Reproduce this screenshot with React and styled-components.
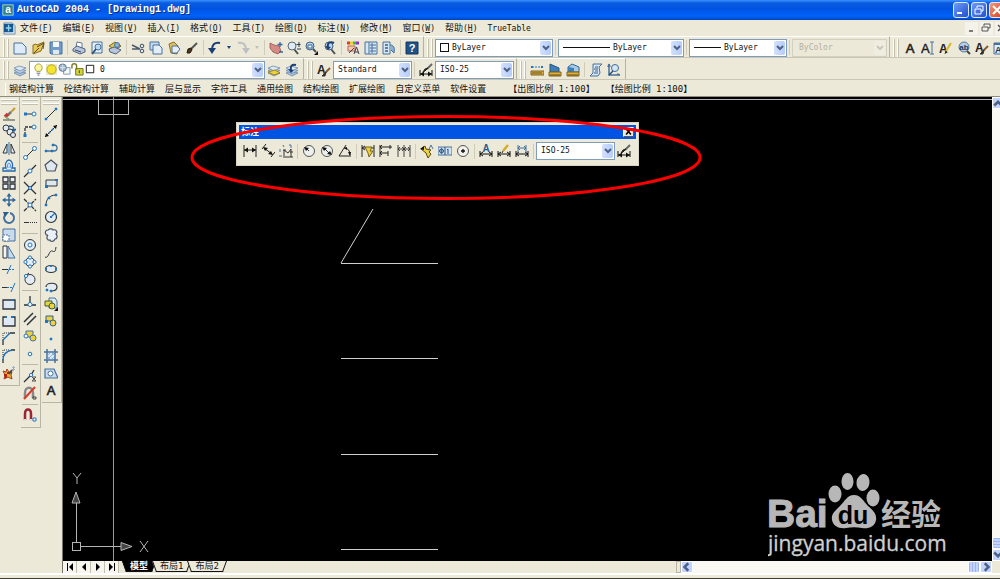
import React from 'react'
import styled, { createGlobalStyle, css } from 'styled-components'

const INK = '#2e3338'
const BLUE = '#1f74c4'
const STEEL = '#46719c'
const GOLD = '#ecd23c'

const dimBase = <path d="M1 7v6M13 7v6M1 10h12M4 8L1 10l3 2M10 8l3 2-3 2" stroke="#111" />

const layerStack = (
  <g stroke="#5d7fa5" strokeWidth=".7">
    <path d="M1 10l5-2 7 2-6 3z" fill="#a9c2dc" />
    <path d="M1 7.500l5-2 7 2-6 3z" fill="#c0d3e6" />
    <path d="M1 5l5-2 7 2-6 3z" fill="#dbe7f3" />
  </g>
)

const icons = {
  new: <path d="M1 2h8l4 4v7H1z" fill="#dcebf7" stroke={STEEL} />,
  open: <><path d="M2 4l3-1 1 1 7-3-3 9-8 3z" fill="#e8c75a" stroke="#8d6c1e" /><path d="M6 6l7-4-1 6M3 12l5-5" stroke="#5b4a1e" /></>,
  save: <><path d="M1 1h12v12H2l-1-1z" fill="#6f9cc8" stroke={STEEL} /><path d="M4 1h6v5H4z" fill="#f3f7fb" stroke="none" /><path d="M4 9h6v4H4z" fill="#dfe9f3" stroke="none" /></>,
  print: <><path d="M4 6l1-5 5 1v5z" fill="#fff" stroke="#65789a" /><path d="M1 8l4-3 8 3v3l-5 2-7-3z" fill="#b9c5da" stroke="#4e6284" /><path d="M3 9l6 2" stroke="#324566" /></>,
  preview: <><path d="M2 1h10v11H2z" fill="#e7f0f8" stroke={STEEL} /><circle cx="8" cy="6" r="3" fill="#bcd8f0" stroke={STEEL} /><path d="M6 8l-4 5" stroke="#2f5379" strokeWidth="2" /></>,
  publish: <><path d="M1 5l6-4 6 4-5 4z" fill="#e9c540" stroke="#846b1d" /><path d="M1 8l5-2 7 3-5 4-6-2z" fill="#b9c5da" stroke="#4e6284" /><circle cx="9" cy="4" r="2.500" fill="#88b5df" stroke={STEEL} /></>,
  cut: <><path d="M1 4l8 4M1 8h8" stroke="#4e5a68" strokeWidth="1.500" /><circle cx="11" cy="5" r="1.800" stroke="#384d70" /><circle cx="11" cy="10" r="1.800" stroke="#384d70" /></>,
  copy: <><path d="M1 1h9v8H1z" fill="#c5dbef" stroke={STEEL} /><path d="M4 4h6l3 3v6H4z" fill="#e3eef8" stroke={STEEL} /></>,
  paste: <><path d="M2 3l5-2 4 4-1 8-6-1z" fill="#e2c25c" stroke="#87702c" /><path d="M5 5h5l3 3-3 4H5z" fill="#e6eff8" stroke={STEEL} /></>,
  match: <><path d="M6 8l6-6" stroke="#555" strokeWidth="2" /><path d="M2 12l1-4 3-1 1 2-2 3z" fill="#4b3324" stroke="#2b1d14" /></>,
  undo: <><path d="M12 2C6 1 4 4 4 9" stroke="#1c3f73" strokeWidth="2" /><path d="M0 7l4 6 4-6z" fill="#1c3f73" stroke="none" /></>,
  redo: <><path d="M2 2c6-1 8 2 8 7" stroke="#bdc0c2" strokeWidth="2" /><path d="M14 7l-4 6-4-6z" fill="#bdc0c2" stroke="none" /></>,
  pan: <><path d="M1 2l4 2 5 1 2 5-3 3-5-2-3-4z" fill="#d68a84" stroke="#8d5453" strokeWidth=".8" /><path d="M11 1v5M8.500 3.500h5M10 11h4" stroke="#36679a" strokeWidth="1.300" /></>,
  zoomRt: <><path d="M7 8l4 5" stroke="#4b4f54" strokeWidth="2" /><circle cx="5" cy="5" r="4" fill="#dfeaf4" stroke="#58697a" /><path d="M12 1v5M9.500 3.500h4M10 8h4" stroke="#223e66" /></>,
  zoomWin: <><path d="M8 8l3 3" stroke="#4b4f54" strokeWidth="2" /><circle cx="5" cy="5" r="4" fill="#b8d2ec" stroke="#46617d" /><path d="M3 4h4v3H3z" fill="#fff" stroke="#336699" /><path d="M13 10v4H9z" fill="#111" stroke="none" /></>,
  zoomPrev: <><path d="M8 8l4 5" stroke="#4b4f54" strokeWidth="2" /><circle cx="6" cy="5" r="4" fill="#b8d2ec" stroke="#46617d" /><path d="M11 2C7 0 4 2 5 6" stroke="#1c3f73" strokeWidth="2" /><path d="M2 5l3 4 3-3z" fill="#1c3f73" stroke="none" /></>,
  props: <><path d="M1 2h3" stroke="#e33" strokeWidth="3" /><path d="M4 2h3" stroke="#e5d22b" strokeWidth="3" /><path d="M7 2h3" stroke="#3ab549" strokeWidth="3" /><path d="M10 2h3" stroke="#8c34c9" strokeWidth="3" /><path d="M2 5h7v5H2z" fill="#f3c9b5" stroke="#b4644b" /><path d="M3 12l5-5M8 13l2.500-7 2.500 7M9 11h3" stroke="#3c3f55" /></>,
  design: <><path d="M1 1h12v12H1z" fill="#d8e7f4" stroke={STEEL} /><path d="M5 1v12M6 4h6M6 7h6M6 10h6M8 2v10" stroke={STEEL} /></>,
  palettes: <><path d="M1 1h7v12H1z" fill="#d8e7f4" stroke={STEEL} /><path d="M3 4h3M3 7h3M3 10h3" stroke="#345f8b" strokeWidth="1.500" /><path d="M8 4c4 0 5 3 4 8l-3-3" fill="#89afd2" stroke={STEEL} /></>,
  help: <><path d="M1 1h12v12H1z" fill="#1e5288" stroke="#12375f" /><text x="7" y="11" textAnchor="middle" fontFamily="Liberation Sans" fontWeight="700" fontSize="11" fill="#fff" stroke="none">?</text></>,

  singleText: <><text x="0" y="12" fontFamily="Liberation Sans" fontSize="13" fill="#222" stroke="#222" strokeWidth=".4">A</text><path d="M9 1h4M11 1v12M9 13h4" stroke={STEEL} /></>,
  editText: <><text x="0" y="12" fontFamily="Liberation Sans" fontSize="12" fontWeight="700" fill="#222" stroke="none">A</text><path d="M12 2L7 10" stroke="#d7b72b" strokeWidth="2" /><path d="M7 10l-1 3" /></>,
  find: <><circle cx="7" cy="6" r="5" fill="#b6cfe8" stroke="#5b7896" /><path d="M10 10l3 3" stroke="#444" strokeWidth="2" /><text x="7" y="9" textAnchor="middle" fontFamily="Liberation Sans" fontSize="8" fontWeight="700" fill="#17375e" stroke="none">ab</text></>,
  textStyle: <><text x="0" y="11" fontFamily="Liberation Sans" fontSize="12" fontWeight="700" fill="#222" stroke="none">A</text><path d="M13 5L8 10" stroke="#8b5a2f" strokeWidth="2" /><path d="M9 9l-1 4-3 0z" fill="#333" stroke="#333" /></>,
  scaleText: <><path d="M1 2h13v11H1z" fill="#e5eef7" stroke={STEEL} /><path d="M1 3h13" stroke={STEEL} strokeWidth="2" /><text x="2" y="12" fontFamily="Liberation Sans" fontSize="9" fontWeight="700" fill="#17375e" stroke="none">A</text></>,

  layers: layerStack,
  makeCurrent: <>{layerStack}<path d="M1 9l6 3 6-2-5-3z" fill={GOLD} stroke="#9a8320" /></>,
  layerPrev: <>{layerStack}<path d="M11 2C7 1 5 3 6 7" stroke="#1c3f73" strokeWidth="2" /><path d="M3 6l3 4 3-3z" fill="#1c3f73" stroke="none" /></>,
  bulb: <><path d="M5 9C1 5 4 1 7 1s6 4 2 8z" fill="#fbf59b" stroke="#9d9531" /><path d="M5 11h4M6 13h2" stroke="#596070" /></>,
  sun: <><path d="M1 1h12v12H1z" fill="#e9e6c9" stroke="none" /><circle cx="7" cy="7" r="5" fill="#f5e42e" stroke="#b09d1c" /></>,
  freeze: <><path d="M6 5h7v7H6z" fill="#f4f6f8" stroke="#7e93a8" /><circle cx="5" cy="5" r="4" fill="#a4b8cc" stroke="#617b97" /><path d="M5 2v6M2 5h6" stroke="#dbe6f0" /></>,
  unlock: <><path d="M5 6h8v7H5z" fill="#d2d439" stroke="#6d701e" /><path d="M1 6V3c0-3 5-3 5 0v4" stroke="#777b25" strokeWidth="1.500" /><path d="M9 8v3" /></>,
  swatch: <path d="M2.500 2.500h8v8h-8z" fill="#fff" stroke="#111" />,
  dimStyle: <><path d="M1 7v6M13 7v6M1 11h12" stroke="#111" /><path d="M1 11l4-2.500v5zM13 11l-4-2.500v5z" fill="#111" stroke="none" /><path d="M13 1L8 6" stroke="#666" strokeWidth="2" /><path d="M9 5L6 8l-2 1 2-3z" fill="#222" stroke="#222" /></>,
  distance: <><path d="M1 8h13v4H1z" fill="#dcae3e" stroke="#7c611d" /><path d="M3 9v2M5 9v2M7 9v2M9 9v2M11 9v2" stroke="#695116" /><path d="M2 4h10" stroke={BLUE} strokeDasharray="2 1" /><path d="M1 3h2v2H1zM11 3h2v2h-2z" fill={BLUE} stroke="none" /></>,
  area: <><path d="M2 1l9 4v4H2z" fill="#3d7fb8" stroke="#255682" /><path d="M1 9h12v4H1z" fill="#dcae3e" stroke="#7c611d" /><path d="M3 11v2M5 11v2M7 11v2M9 11v2M11 11v2" stroke="#695116" /></>,
  mass: <><path d="M2 4l4-3 7 3v5H2z" fill="#a9cbe8" stroke="#316796" /><path d="M2 4l6 1v4H2z" fill="#3d7fb8" stroke="none" /><path d="M1 9h12v4H1z" fill="#dcae3e" stroke="#7c611d" /><path d="M3 11v2M5 11v2M7 11v2M9 11v2M11 11v2" stroke="#695116" /></>,
  list: <><path d="M4 1h9l-3 3 1 6-2 3H1l3-3z" fill="#d8e7f4" stroke={STEEL} /><path d="M6 4h3M5 6h4M6 8h3M5 10h4" stroke="#345f8b" /></>,
  locate: <><path d="M2 1v11h11M2 1L1 4M2 1l1 3M13 12l-3-1" stroke={STEEL} strokeWidth="1.500" /><circle cx="8" cy="5" r="3.500" fill="#d7e6f3" stroke="#3f6b97" /><path d="M6 8l-4 4" stroke="#1f4a79" strokeWidth="1.500" /></>,

  erase: <><path d="M13 1L9 5" stroke="#c79930" strokeWidth="2" /><path d="M9 5L6 8" stroke="#777" strokeWidth="2.500" /><path d="M6 7l-3 3" stroke="#c5362c" strokeWidth="3.500" /><path d="M3 10l4 2" stroke="#7fae7a" strokeWidth="1.500" /><path d="M1 13h12" stroke="#444" /></>,
  copyObj: <><circle cx="4" cy="4" r="3" fill="#dfe9f3" /><circle cx="8" cy="8" r="3" fill="#dfe9f3" /><circle cx="11" cy="11" r="2.500" fill="#dfe9f3" /><path d="M7 2c4 0 5 1 5 4M10 5l2 2 2-2" stroke="#1d5a94" strokeWidth="1.300" /></>,
  mirror: <><path d="M5 3v9H1zM9 3v9h4z" fill="#e4edf5" stroke={INK} /><path d="M7 1v13" stroke={BLUE} /></>,
  offset: <><path d="M1 12h12V9H10c2-4-1-8-3-8S2 5 4 9H1z" fill="#e3eefa" stroke="#2866a6" strokeWidth="1.300" /><path d="M4 11h6M6 9c-1-3 0-5 1-5s2 2 1 5" stroke="#3f88cd" /></>,
  array: <path d="M1 1h5v5H1zM8 1h5v5H8zM1 8h5v5H1zM8 8h5v5H8z" fill="#e7eef5" stroke={INK} strokeWidth="1.300" />,
  move: <><path d="M7 1v12M1 7h12" stroke="#35699c" strokeWidth="1.500" /><path d="M4.500 3.500L7 0l2.500 3.500zM4.500 10.500L7 14l2.500-3.500zM3.500 4.500L0 7l3.500 2.500zM10.500 4.500L14 7l-3.500 2.500z" fill="#35699c" stroke="none" /></>,
  rotate: <><path d="M3 4a5 5 0 1 0 5-2" stroke="#45719f" strokeWidth="2" /><path d="M1 1l6 0-4 5z" fill="#2d5b8b" stroke="none" /></>,
  scale: <><path d="M1 1h12v12H1z" fill="#c9dced" stroke={STEEL} /><path d="M1 7h6v6H1z" fill="#fff" stroke={STEEL} strokeDasharray="2 1" /></>,
  stretch: <><path d="M1 1h4v12H1z" fill="#f2f5f8" stroke={INK} /><path d="M6 1l7 12H6z" fill="#c9dced" stroke={STEEL} /></>,
  trim: <><path d="M0 7.500h6" stroke={INK} /><path d="M7 7.500h6" stroke={BLUE} strokeDasharray="2 1" /><path d="M9 3L5 12" stroke={BLUE} /></>,
  extend: <><path d="M0 7.500h5" stroke={INK} /><path d="M5 7.500h5" stroke={BLUE} strokeDasharray="2 1" /><path d="M13 3L9 12" stroke={BLUE} /></>,
  breakPt: <><path d="M1 3h12v9H1z" fill="#dfe9f3" stroke={INK} strokeWidth="1.300" /><path d="M9 2h2v2H9z" fill={BLUE} stroke="none" /></>,
  break: <><path d="M1 3h12v9H1z" fill="#dfe9f3" stroke="none" /><path d="M4 3H1v9h12V3h-3" stroke={INK} strokeWidth="1.300" /><path d="M3 2h2v2H3zM9 2h2v2H9z" fill={BLUE} stroke="none" /></>,
  chamfer: <><path d="M1 13V8M8 1h5" stroke={INK} strokeWidth="1.300" /><path d="M1 8V1h7" stroke={INK} strokeDasharray="1 1" /><path d="M1 8l7-7" stroke={BLUE} strokeWidth="1.500" /></>,
  fillet: <><path d="M1 14v-4M9 1h4" stroke={INK} strokeWidth="1.300" /><path d="M1 8V1h7" stroke={INK} strokeDasharray="1 1" /><path d="M1 11C1 4 5 2 10 1" stroke={BLUE} strokeWidth="1.500" /></>,
  explode: <><path d="M1 5l3 1 1-3 2 3 3 0-1 3 1 4-4-2-4 2 1-4z" fill="#e5b22e" stroke="#a73a20" /><path d="M2 9h2v3M6 6v2" stroke="#b9201a" strokeWidth="2" /><path d="M7 8l3-4" stroke="#444" strokeWidth="2" /><path d="M10 1l3 3M13 1l-3 3M11.500 0v5" stroke="#8ca4bc" strokeWidth=".8" /></>,

  tempTrack: <><path d="M2 7h7" stroke={INK} /><path d="M1 5.500h3v3H1z" fill={BLUE} stroke="none" /><circle cx="11" cy="7" r="2" fill="#fff" stroke={BLUE} /></>,
  snapFrom: <><path d="M2 11V3h8" stroke={INK} strokeWidth="1.300" strokeDasharray="3 1" /><path d="M.500 10h3v3h-3z" fill={BLUE} stroke="none" /><circle cx="11" cy="3" r="2" fill="#fff" stroke={BLUE} /></>,
  snapEnd: <><path d="M3 11l8-8" stroke={INK} /><circle cx="2.500" cy="11.500" r="2" fill="#fff" stroke={BLUE} /><circle cx="11.500" cy="2.500" r="2" fill="#fff" stroke={BLUE} /></>,
  snapMid: <><path d="M1 13L13 1" stroke={INK} strokeWidth="1.300" /><circle cx="7" cy="7" r="2" fill="#fff" stroke={BLUE} /></>,
  snapInt: <><path d="M1 1l12 12M1 13L13 1" stroke={INK} strokeWidth="1.300" /><circle cx="7" cy="7" r="1.500" fill="#cfe3f5" stroke={BLUE} /></>,
  snapApp: <><path d="M1 1l12 12M1 13L13 1" stroke={INK} strokeWidth="1.300" strokeDasharray="4 1" /><circle cx="7" cy="7" r="2" fill="#fff" stroke={BLUE} /></>,
  snapExt: <><path d="M1 7.500h5" stroke={INK} /><path d="M7 7.500h7" stroke={INK} strokeDasharray="1 1" /></>,
  snapCen: <><circle cx="7" cy="7" r="5.500" fill="#e3ebf3" stroke={INK} /><circle cx="7" cy="7" r="2" fill="#fff" stroke={BLUE} /></>,
  snapQuad: <><circle cx="7" cy="7" r="4.500" fill="#e3ebf3" stroke={INK} /><g fill="#fff" stroke={BLUE}><circle cx="7" cy="2.500" r="1.600" /><circle cx="7" cy="11.500" r="1.600" /><circle cx="2.500" cy="7" r="1.600" /><circle cx="11.500" cy="7" r="1.600" /></g></>,
  snapTan: <><circle cx="7" cy="7.500" r="5" fill="#e3ebf3" stroke={INK} /><path d="M1 5l5-4" stroke={INK} /><circle cx="3" cy="4" r="1.600" fill="#fff" stroke={BLUE} /></>,
  snapPerp: <><path d="M7 1v9M1 10h12" stroke={INK} strokeWidth="1.300" /><circle cx="7" cy="9.500" r="2" fill="#fff" stroke={BLUE} /></>,
  snapPar: <path d="M1 10l9-9M4 13l9-9" stroke={INK} strokeWidth="1.500" />,
  snapIns: <><path d="M3 2h7v6H3z" fill={GOLD} stroke={STEEL} /><circle cx="10" cy="9" r="3" fill={GOLD} stroke={STEEL} /><circle cx="3" cy="7" r="2" fill="#fff" stroke={BLUE} /></>,
  snapNode: <circle cx="7" cy="7" r="1.800" fill="#fff" stroke={BLUE} />,
  snapNear: <><path d="M1 13L8 6l3-5" stroke={INK} strokeWidth="1.300" /><circle cx="8" cy="6" r="1.600" fill="#fff" stroke={BLUE} /><path d="M9 8h4l-4 4h4z" stroke="#555" /></>,
  snapNone: <><path d="M2 12V7c0-7 8-7 8 0v5" stroke="#888" strokeWidth="2.500" /><path d="M1 13L12 1" stroke="#d63a2b" strokeWidth="2" /><path d="M10 11h3v2h-3z" stroke="#444" /></>,
  snapSet: <><path d="M2 12V6c0-6 6-6 6 0v6" stroke="#9b2437" strokeWidth="2.500" /><path d="M1 12h2M7 12h2" stroke="#ddd" strokeWidth="2" /><path d="M10 10h3v3h-3z" fill="#fff" stroke={BLUE} /></>,

  line: <><path d="M2 12L12 2" stroke={INK} /><path d="M1 11h2v2H1zM11 1h2v2h-2z" fill={BLUE} stroke={BLUE} strokeWidth=".5" /></>,
  xline: <><path d="M1 13L13 1" stroke={INK} /><path d="M1 13l1-4 3 3zM13 1l-1 4-3-3z" fill="#111" stroke="none" /><path d="M5 8h1v1H5zM8 5h1v1H8z" fill={BLUE} stroke={BLUE} /></>,
  pline: <><path d="M2 10h8c4 0 4-6 0-6H8" stroke={STEEL} strokeWidth="1.300" /><path d="M1 9h2v2H1zM7 9h2v2H7zM8 3h2v2H8z" fill={BLUE} stroke={BLUE} strokeWidth=".5" /></>,
  polygon: <path d="M7 1l6 5-2 6H3L1 6z" fill="#dfe7ef" stroke="#48535f" strokeWidth="1.200" />,
  rect: <><path d="M2 4h11v6H2z" fill="#dfe7ef" stroke={INK} /><path d="M1 9h3v3H1zM11 3h3v2h-3z" fill={BLUE} stroke="none" /></>,
  arc: <><path d="M2 12C2 6 6 2 12 2" stroke={INK} /><path d="M1 11h2v2H1zM4 4h2v2H4zM11 1h2v2h-2z" fill={BLUE} stroke={BLUE} strokeWidth=".5" /></>,
  circle: <><circle cx="7" cy="7" r="5.500" fill="#e3ebf3" stroke={INK} strokeWidth="1.200" /><path d="M7 7l4-4" stroke={BLUE} strokeWidth="1.300" /><path d="M6 6h2v2H6z" fill={BLUE} stroke="none" /></>,
  revcloud: <path d="M4 7C1 8 0 2 4 2c2-2 5-1 5 0 3-1 5 2 3 4 2 2 1 5-1 5-1 3-5 3-5 1-3 1-4-3-2-5z" fill="#e9f0f6" stroke="#48535f" strokeWidth="1.200" />,
  spline: <path d="M1 12C4 14 5 7 7 6s4 4 5-4" stroke={INK} />,
  ellipse: <><ellipse cx="7" cy="7" rx="5.500" ry="3.500" fill="#e3ebf3" stroke={INK} strokeWidth="1.200" /><path d="M1 6h2v2H1zM11 6h2v2h-2zM6 3h2v2H6z" fill={BLUE} stroke="none" /></>,
  ellipseArc: <><path d="M2 7c0-5 11-5 11 0 0 3-3 4-6 4" fill="#e3ebf3" stroke={INK} strokeWidth="1.200" /><path d="M2 9h2v2H2zM6 10h2v2H6z" fill={BLUE} stroke={BLUE} strokeWidth=".5" /></>,
  insertBlock: <><path d="M5 1h6l2 3v7H5z" fill="#dce9f5" stroke={STEEL} /><path d="M1 4h7v5H1z" fill={GOLD} stroke="#3f5f39" /><circle cx="8" cy="9" r="3" fill={GOLD} stroke="#3f5f39" /><path d="M14 10v4h-4z" fill="#111" stroke="none" /></>,
  makeBlock: <><path d="M2 2h7v5H2z" fill={GOLD} stroke="#35618c" /><circle cx="9" cy="9" r="3" fill={GOLD} stroke="#35618c" /><path d="M1 6h3v3H1z" fill={BLUE} stroke="none" /></>,
  point: <path d="M6 6h2v2H6z" fill={BLUE} stroke={BLUE} strokeWidth=".5" />,
  hatch: <><path d="M3 3h8v8H3z" fill="#dbe9f6" stroke="none" /><path d="M3 0v14M11 0v14M0 3h14M0 11h14" stroke={STEEL} strokeWidth="1.500" /><path d="M3 7l4-4M3 11l8-8M7 11l4-4M3 7l4 4M7 3l4 4" stroke="#6f9ac4" strokeWidth=".7" /></>,
  region: <><path d="M1 3h9l4 9H1z" fill="#c9dced" stroke={STEEL} strokeWidth="1.200" /><circle cx="6.500" cy="7.500" r="2.500" fill="#fff" stroke={STEEL} /></>,
  mtext: <text x="7" y="12" textAnchor="middle" fontFamily="Liberation Sans" fontSize="13" fill="#222" stroke="#222" strokeWidth=".6">A</text>,

  dimLinear: <><path d="M1 1v12M13 1v12M1 6h12" stroke="#222" /><path d="M1 6l4-2.500v5zM13 6L9 3.500v5z" fill="#111" stroke="none" /></>,
  dimAligned: <><path d="M3 4l8 6M5 0L1 5M14 8l-4 5" stroke="#222" /><path d="M2 3l5 1-3 3zM12 11l-5-1 3-3z" fill="#111" stroke="none" /></>,
  dimOrdinate: <><path d="M4 13h10M5 12V6l4 3 3-4v8M4 6h3M11 8h3" stroke="#333" /><path d="M1 5v3M0 12h3M4 1l1 2M10 1h2v3" stroke={STEEL} /></>,
  dimRadius: <><circle cx="7" cy="7" r="5.500" fill="#eef0ee" stroke="#555" /><path d="M7 7L4 4" /><path d="M2 3l5 1-3 3z" fill="#111" stroke="none" /></>,
  dimDiameter: <><circle cx="7" cy="7" r="5.500" fill="#eef0ee" stroke="#555" /><path d="M4 4l6 6" /><path d="M2 3l5 1-3 3zM12 11l-5-1 3-3z" fill="#111" stroke="none" /></>,
  dimAngular: <><path d="M8 1L1 12h12M6 4c4 0 6 3 6 7" stroke="#222" /><path d="M12 12l-2-4h3zM6 4l3-1v3z" fill="#111" stroke="none" /></>,
  dimQuick: <><path d="M1 1v12M13 1v12M1 4h12M4 2L1 4l3 2" stroke="#222" /><path d="M4 3h7l-2 4h3l-4 6-1-4z" fill={GOLD} stroke="#75611c" /></>,
  dimBaseline: <path d="M1 1v12M1 3h12M1 9h8M11 1v4M9 7v5M3 1L1 3l2 2M3 7L1 9l2 2" stroke="#222" />,
  dimContinue: <path d="M1 1v12M7 1v12M13 1v12M1 5h12M3 3L1 5l2 2M5 3l2 2-2 2M9 3L7 5l2 2M11 3l2 2-2 2" stroke="#333" strokeWidth=".9" />,
  dimLeader: <><path d="M1 5l4-3 1 3 5 1-2 2 2 2-3 4-2-5z" fill={GOLD} stroke="#56481a" /><path d="M0 5l4-3v4z" fill="#111" stroke="none" /><path d="M9 5l2-4 2 4" stroke={STEEL} /></>,
  tolerance: <><path d="M0 3h14v8H0z" fill="#d1e2f1" stroke={STEEL} /><path d="M7 3v8M10 5v5M9 6l1-1" stroke="#28547f" /><circle cx="3.500" cy="7" r="2" stroke="#28547f" /><path d="M3.500 4v6M1 7h5" stroke="#28547f" strokeWidth=".7" /></>,
  centerMark: <><circle cx="7" cy="7" r="5.500" fill="#f1f1ec" stroke="#555" /><path d="M7 5v4M5 7h4" stroke="#111" strokeWidth="1.300" /></>,
  dimEdit: <>{dimBase}<text x="7" y="8" textAnchor="middle" fontFamily="Liberation Sans" fontWeight="700" fontSize="10" fill="#2a5a8c" stroke="none">A</text></>,
  dimTextEdit: <>{dimBase}<path d="M11 1L6 7" stroke="#d2ad2c" strokeWidth="2.500" /><path d="M6 7l-1 2" /></>,
  dimUpdate: <>{dimBase}<path d="M3 1v8M11 1v8M3 4h8M5 2L3 4l2 2M9 2l2 2-2 2" stroke={STEEL} /></>,
}

const Icon = ({ name }) => (
  <IconSvg viewBox="0 0 14 14" aria-hidden="true">{icons[name]}</IconSvg>
)

const Tools = ({ names }) => names.map((name, i) => (
  name === '|'
    ? <Separator key={i} />
    : <ToolButton key={i} type="button" aria-label={name}><Icon name={name} /></ToolButton>
))

const Chevron = () => (
  <ChevronSvg viewBox="0 0 8 8" aria-hidden="true">
    <path d="M1 2l3 3 3-3" />
  </ChevronSvg>
)

const Combo = ({ label, value, width, disabled, line, children }) => (
  <ComboFrame $width={width} $disabled={disabled}>
    {children}
    {line && <LineSample $width={line} />}
    <ComboSelect aria-label={label} disabled={disabled} defaultValue={value}>
      <option>{value}</option>
    </ComboSelect>
    <ComboArrow $disabled={disabled}><Chevron /></ComboArrow>
  </ComboFrame>
)

const menus = [
  ['文件', 'F'], ['编辑', 'E'], ['视图', 'V'], ['插入', 'I'], ['格式', 'O'], ['工具', 'T'],
  ['绘图', 'D'], ['标注', 'N'], ['修改', 'M'], ['窗口', 'W'], ['帮助', 'H'],
]

const extraMenus = [
  '钢结构计算', '砼结构计算', '辅助计算', '层与显示', '字符工具',
  '通用绘图', '结构绘图', '扩展绘图', '自定义菜单', '软件设置',
]

const modifyTools = ['erase', 'copyObj', 'mirror', 'offset', 'array', 'move', 'rotate', 'scale',
  'stretch', 'trim', 'extend', 'breakPt', 'break', 'chamfer', 'fillet', 'explode']

const snapTools = ['tempTrack', 'snapFrom', '|', 'snapEnd', 'snapMid', 'snapInt', 'snapApp', 'snapExt', '|',
  'snapCen', 'snapQuad', 'snapTan', '|', 'snapPerp', 'snapPar', 'snapIns', 'snapNode', '|',
  'snapNear', 'snapNone', '|', 'snapSet']

const drawTools = ['line', 'xline', 'pline', 'polygon', 'rect', 'arc', 'circle', 'revcloud', 'spline',
  'ellipse', 'ellipseArc', 'insertBlock', 'makeBlock', 'point', 'hatch', 'region', 'mtext']

const TitleBar = () => (
  <TitleRow>
    <AppLogo viewBox="0 0 14 14" aria-hidden="true">
      <path d="M0 0h14v14H0z" fill="#2e7f94" />
      <path d="M1 1h12v12H1z" fill="none" stroke="#a5d5dd" />
      <text x="7" y="11" textAnchor="middle" fontFamily="Liberation Sans" fontWeight="700" fontSize="12" fill="#fff">a</text>
    </AppLogo>
    <Title>AutoCAD 2004 - [Drawing1.dwg]</Title>
    <WindowButtons>
      <WindowButton type="button" aria-label="最小化">
        <svg viewBox="0 0 14 14"><path d="M3 10h5" strokeWidth="2" /></svg>
      </WindowButton>
      <WindowButton type="button" aria-label="还原">
        <svg viewBox="0 0 14 14"><path d="M5 5V3h6v5H9M3 6h6v5H3z" /></svg>
      </WindowButton>
      <WindowButton type="button" aria-label="关闭" $danger>
        <svg viewBox="0 0 14 14"><path d="M3 3l8 8M11 3l-8 8" strokeWidth="2" /></svg>
      </WindowButton>
    </WindowButtons>
  </TitleRow>
)

const MenuBar = () => (
  <MenuRow>
    <DocIcon viewBox="0 0 14 14" aria-hidden="true">
      <path d="M1 1h9l3 3v9H1z" fill="#e5eef6" stroke="#6a8cad" />
      <path d="M1 2h10v9H1z" fill="#16568a" />
      <path d="M6 3v7M3 6.500h6" stroke="#8fd6f4" strokeWidth="1.500" />
    </DocIcon>
    {menus.map(([name, key]) => (
      <MenuItem key={key} type="button">{name}<Latin>(<u>{key}</u>)</Latin></MenuItem>
    ))}
    <MenuItem type="button"><Latin>TrueTable</Latin></MenuItem>
    <DocButtons>
      <DocButton type="button" aria-label="最小化文档"><svg viewBox="0 0 10 10"><path d="M3 8h4" strokeWidth="1.500" /></svg></DocButton>
      <DocButton type="button" aria-label="还原文档"><svg viewBox="0 0 10 10"><path d="M3 3V1h6v4H7M1 4h6v4H1z" /></svg></DocButton>
      <DocButton type="button" aria-label="关闭文档"><svg viewBox="0 0 10 10"><path d="M2 2l6 6M8 2L2 8" strokeWidth="1.500" /></svg></DocButton>
    </DocButtons>
  </MenuRow>
)

const StandardRow = () => (
  <ToolRow>
    <Toolbar>
      <Grip />
      <Tools names={['new', 'open', 'save', '|', 'print', 'preview', 'publish', '|', 'cut', 'copy', 'paste', 'match', '|', 'undo']} />
      <DropButton type="button" aria-label="放弃列表"><svg viewBox="0 0 4 3"><path d="M0 0h4L2 3z" /></svg></DropButton>
      <ToolButton type="button" aria-label="redo"><Icon name="redo" /></ToolButton>
      <DropButton type="button" aria-label="重做列表" disabled><svg viewBox="0 0 4 3"><path d="M0 0h4L2 3z" /></svg></DropButton>
      <Tools names={['|', 'pan', 'zoomRt', 'zoomWin', 'zoomPrev', '|', 'props', 'design', 'palettes', '|', 'help']} />
    </Toolbar>
    <Toolbar>
      <Grip />
      <Combo label="颜色" value="ByLayer" width={118}><ComboSwatch /></Combo>
      <Separator />
      <Combo label="线型" value="ByLayer" width={126} line={47} />
      <Separator />
      <Combo label="线宽" value="ByLayer" width={98} line={27} />
      <Separator />
      <Combo label="打印样式" value="ByColor" width={95} disabled />
    </Toolbar>
    <Toolbar>
      <Grip />
      <Tools names={['mtext', 'singleText', 'editText', 'find', 'textStyle', 'scaleText']} />
    </Toolbar>
  </ToolRow>
)

const LayerRow = () => (
  <ToolRow>
    <Toolbar>
      <Grip />
      <Tools names={['layers']} />
      <Combo label="图层" value="0" width={236}>
        <LayerState>
          {['bulb', 'sun', 'freeze', 'unlock', 'swatch'].map((name) => <Icon key={name} name={name} />)}
        </LayerState>
      </Combo>
      <Tools names={['makeCurrent', 'layerPrev']} />
    </Toolbar>
    <Toolbar>
      <Grip />
      <Tools names={['textStyle']} />
      <Combo label="文字样式" value="Standard" width={79} />
      <Separator />
      <Tools names={['dimStyle']} />
      <Combo label="标注样式" value="ISO-25" width={79} />
    </Toolbar>
    <Toolbar>
      <Grip />
      <Tools names={['distance', 'area', 'mass', '|', 'list', 'locate']} />
    </Toolbar>
  </ToolRow>
)

const ExtraRow = () => (
  <ExtraMenuRow>
    {extraMenus.map((name) => <MenuItem key={name} type="button">{name}</MenuItem>)}
    <ScaleGroup>
      <MenuItem type="button">【出图比例 1:100】</MenuItem>
      <MenuItem type="button">【绘图比例 1:100】</MenuItem>
    </ScaleGroup>
  </ExtraMenuRow>
)

const DimensionPalette = () => (
  <Palette>
    <PaletteTitle>
      <span>标注</span>
      <PaletteClose type="button" aria-label="关闭">
        <svg viewBox="0 0 10 10"><path d="M2 1l6 7M8 1L2 8" /></svg>
      </PaletteClose>
    </PaletteTitle>
    <PaletteTools>
      <Tools names={['dimLinear', 'dimAligned', 'dimOrdinate', '|', 'dimRadius', 'dimDiameter', 'dimAngular', '|',
        'dimQuick', 'dimBaseline', 'dimContinue', '|', 'dimLeader', 'tolerance', 'centerMark', '|',
        'dimEdit', 'dimTextEdit', 'dimUpdate', '|']} />
      <Combo label="标注样式控制" value="ISO-25" width={79} />
      <Tools names={['dimStyle']} />
    </PaletteTools>
  </Palette>
)

const Watermark = () => (
  <WatermarkSvg viewBox="0 0 180 88">
    <g fill="#b7b7b7" fontFamily="Liberation Sans">
      <text x="-1" y="55" fontWeight="700" fontSize="39" stroke="#b7b7b7">Bai</text>
      <ellipse cx="67" cy="22" rx="6.500" ry="8.500" />
      <ellipse cx="79.500" cy="9.500" rx="6" ry="8.500" />
      <ellipse cx="95" cy="10.500" rx="6.500" ry="8.500" transform="rotate(8 95 10.500)" />
      <ellipse cx="105" cy="26" rx="6.500" ry="8.500" />
      <path d="M86 23c7 0 9 6 14 11 6 5 9 9 8 14-1 7-8 9-14 8-5-1-11-1-16 0-7 1-13-2-14-8-1-6 3-9 8-14 5-5 7-11 14-11z" />
      <text x="85" y="52" textAnchor="middle" fontWeight="700" fontSize="25" fill="#000">du</text>
      <text x="113" y="53" fontFamily="Noto Sans CJK SC" fontWeight="700" fontSize="30">经验</text>
    </g>
    <text x="0" y="79" fontFamily="Open Sans" fontSize="21" fill="#cfcfcf" stroke="#cfcfcf" strokeWidth=".3">jingyan.baidu.com</text>
  </WatermarkSvg>
)

const Drawing = () => (
  <Canvas>
    <DrawingSvg aria-label="图形窗口">
      <g fill="none" shapeRendering="crispEdges">
        <path d="M35 3v14h30V3" stroke="#b5b5b5" />
        <line x1="50" y1="0" x2="50" y2="100%" stroke="#9c9c9c" />
        <line x1="0" y1="2" x2="100%" y2="2" stroke="#b5b5b5" />
        <path d="M278 166h97M278 261h97M278 357h97M278 452h97" stroke="#cfcfcf" />
      </g>
      <path d="M278 166l32-54" stroke="#cfcfcf" />
    </DrawingSvg>
    <UcsSvg viewBox="0 0 100 100">
      <g fill="none" stroke="#b4b4b4">
        <path d="M9 81h8v8H9zM13 81V42M18 85h40" shapeRendering="crispEdges" />
        <path d="M13 31L9 42h8zM69 85.500L58 81.500v8z" fill="#444" />
        <path d="M10 12l4 5 4-5M14 17v6M77 80l8 11M85 80l-8 11" />
      </g>
    </UcsSvg>
    <DimensionPalette />
    <Highlight viewBox="0 0 512 88" aria-hidden="true">
      <ellipse cx="256" cy="43.500" rx="254" ry="41" fill="none" stroke="#fa0000" strokeWidth="3" />
    </Highlight>
    <Watermark />
  </Canvas>
)

const App = () => {
  return (
    <Window>
      <GlobalStyle />
      <TitleBar />
      <MenuBar />
      <StandardRow />
      <LayerRow />
      <ExtraRow />
      <Workspace>
        <SideDock>
          <SideBar><SideGrip /><SideTools $height={277}><Tools names={modifyTools} /></SideTools></SideBar>
          <SideBar><SideGrip /><SideTools $height={319}><Tools names={snapTools} /></SideTools></SideBar>
          <SideBar><SideGrip /><SideTools $height={294}><Tools names={drawTools} /></SideTools></SideBar>
        </SideDock>
        <DocumentArea>
          <CanvasRow>
            <Drawing />
            <VerticalScroll>
              <ScrollButton type="button" aria-label="向上"><svg viewBox="0 0 8 8"><path d="M1 6l3-3 3 3" /></svg></ScrollButton>
              <ScrollGap />
              <ScrollThumb />
              <ScrollButton type="button" aria-label="向下"><svg viewBox="0 0 8 8"><path d="M1 2l3 3 3-3" /></svg></ScrollButton>
            </VerticalScroll>
          </CanvasRow>
          <TabRow>
            <NavButton type="button" aria-label="第一个"><svg viewBox="0 0 8 8"><path d="M1 0h1v8H1zM7 0v8L3 4z" /></svg></NavButton>
            <NavButton type="button" aria-label="上一个"><svg viewBox="0 0 8 8"><path d="M6 0v8L2 4z" /></svg></NavButton>
            <NavButton type="button" aria-label="下一个"><svg viewBox="0 0 8 8"><path d="M2 0v8l4-4z" /></svg></NavButton>
            <NavButton type="button" aria-label="最后一个"><svg viewBox="0 0 8 8"><path d="M6 0h1v8H6zM1 0v8l4-4z" /></svg></NavButton>
            <Tabs>
              <Tab type="button" $active>模型</Tab>
              <Tab type="button">布局1</Tab>
              <Tab type="button">布局2</Tab>
            </Tabs>
            <HorizontalScroll>
              <ScrollSplit />
              <ScrollButton type="button" aria-label="向左"><svg viewBox="0 0 8 8"><path d="M5 1L2 4l3 3" /></svg></ScrollButton>
              <ScrollGap />
              <ScrollThumb $row />
              <ScrollButton type="button" aria-label="向右"><svg viewBox="0 0 8 8"><path d="M3 1l3 3-3 3" /></svg></ScrollButton>
            </HorizontalScroll>
          </TabRow>
        </DocumentArea>
      </Workspace>
      <BottomEdge />
    </Window>
  )
}

const GlobalStyle = createGlobalStyle`
  * {
    box-sizing: border-box;
  }
  body {
    margin: 0;
    overflow: hidden;
    background: #ece9d8;
    color: #111;
    font-family: "DejaVu Sans Mono", "Noto Sans CJK SC", monospace;
    font-size: 9px;
  }
  button, select {
    margin: 0;
    padding: 0;
    border: none;
    background: transparent;
    color: inherit;
    font: inherit;
  }
`

const Window = styled.div`
  display: flex;
  flex-direction: column;
  height: 100vh;
  overflow: hidden;
`

const TitleRow = styled.header`
  display: flex;
  flex: none;
  align-items: center;
  height: 20px;
  padding-left: 2px;
  background: linear-gradient(#3a93ff 0, #0a5be0 3px, #0054e3 9px, #0162fb 16px, #0050d0 19px, #003aa8 20px);
`

const AppLogo = styled.svg`
  width: 12px;
  height: 12px;
`

const Title = styled.h1`
  flex: 1;
  margin: 0 0 0 3px;
  color: #fff;
  font-family: "Liberation Mono", monospace;
  font-size: 10px;
  line-height: 12px;
  text-shadow: 1px 1px #0a2f7c;
`

const WindowButtons = styled.div`
  display: flex;
  gap: 2px;
  width: 47px;
  overflow: hidden;
`

const WindowButton = styled.button`
  flex: none;
  width: 16px;
  height: 16px;
  border: 1px solid #dce8ff;
  border-radius: 3px;
  background: ${(props) => (props.$danger ? 'linear-gradient(135deg, #f0957c, #d8401a)' : 'linear-gradient(135deg, #6f9cf5, #1f4fd0)')};

  svg {
    display: block;
    width: 14px;
    height: 14px;
    fill: none;
    stroke: #fff;
  }
`

const MenuRow = styled.nav`
  display: flex;
  flex: none;
  align-items: center;
  gap: 10px;
  height: 16px;
  padding-left: 3px;
`

const DocIcon = styled.svg`
  width: 13px;
  height: 13px;
  margin-right: -6px;
`

const MenuItem = styled.button`
  flex: none;
  line-height: 13px;
  white-space: nowrap;
`

const Latin = styled.span`
  font-size: 8px;
`

const DocButtons = styled.div`
  display: flex;
  gap: 2px;
  width: 35px;
  margin-left: auto;
  overflow: hidden;
`

const DocButton = styled.button`
  flex: none;
  width: 13px;
  height: 13px;
  padding: 1px;
  background: #f4f2ea;

  svg {
    display: block;
    width: 10px;
    height: 10px;
    fill: none;
    stroke: #555;
  }
`

const ToolRow = styled.div`
  display: flex;
  flex: none;
  height: 22px;
  overflow: hidden;
  border-bottom: 1px solid #c9c6b5;
`

const Toolbar = styled.div`
  display: flex;
  flex: none;
  align-items: center;
  padding: 1px 2px 0 3px;
  border-top: 1px solid #fff;
  border-right: 1px solid #b5b2a2;
`

const Grip = styled.span`
  width: 5px;
  height: 18px;
  margin-right: 3px;
  border: solid #fff;
  border-width: 0 1px;
  box-shadow: 1px 0 #c2bfae, inset 1px 0 #c2bfae;
`

const IconSvg = styled.svg`
  display: block;
  flex: none;
  width: 14px;
  height: 14px;
  fill: none;
  stroke: #2e3338;
`

const ToolButton = styled.button`
  display: flex;
  flex: none;
  align-items: center;
  justify-content: center;
  width: 18px;
  height: 18px;
`

const DropButton = styled.button`
  width: 10px;
  color: #1c3f73;

  svg {
    display: block;
    width: 4px;
    height: 3px;
    margin: 0 auto;
    fill: currentColor;
  }

  &:disabled {
    color: #bdc0c2;
  }
`

const Separator = styled.span`
  flex: none;
  width: 5px;
  height: 15px;
  border-left: 2px solid transparent;
  box-shadow: inset 1px 0 #cfccbb;
`

const ComboFrame = styled.div`
  display: flex;
  flex: none;
  align-items: center;
  width: ${(props) => props.$width}px;
  height: 18px;
  padding: 1px;
  border: 1px solid ${(props) => (props.$disabled ? '#d3d0c0' : '#7f9db9')};
  background: ${(props) => (props.$disabled ? '#ece9d8' : '#fff')};
`

const ComboSelect = styled.select`
  flex: 1;
  min-width: 0;
  height: 14px;
  padding: 0 0 0 3px;
  appearance: none;
  outline: none;
  color: #111;
  font-size: 8px;
  line-height: 14px;

  &:disabled {
    padding-left: 5px;
    color: #b3b0a0;
    opacity: 1;
  }
`

const ComboArrow = styled.span`
  display: flex;
  align-items: center;
  justify-content: center;
  width: 11px;
  height: 14px;
  border-radius: 2px;
  background: ${(props) => (props.$disabled ? '#efede2' : 'linear-gradient(90deg, #d3e0fd, #b5ccfb)')};
  color: ${(props) => (props.$disabled ? '#c9c7ba' : '#4d6185')};
  pointer-events: none;
`

const ChevronSvg = styled.svg`
  width: 8px;
  height: 8px;
  fill: none;
  stroke: currentColor;
  stroke-width: 2;
`

const ComboSwatch = styled.span`
  width: 9px;
  height: 9px;
  margin-left: 3px;
  border: 1px solid #111;
`

const LineSample = styled.span`
  width: ${(props) => props.$width}px;
  height: 1px;
  margin-left: 3px;
  background: #111;
`

const LayerState = styled.span`
  display: flex;
  margin-left: 1px;

  svg {
    width: 13px;
    height: 13px;
  }
`

const ExtraMenuRow = styled.nav`
  display: flex;
  flex: none;
  align-items: center;
  gap: 10px;
  height: 17px;
  padding: 2px 0 0 5px;
  border-bottom: 1px solid #8f8c7d;

  &::before {
    content: "";
    width: 1px;
    height: 13px;
    margin-right: -7px;
    background: #fff;
  }
`

const ScaleGroup = styled.div`
  display: flex;
  gap: 11px;
  margin-left: 12px;
`

const Workspace = styled.main`
  display: flex;
  flex: 1;
  min-height: 0;
`

const SideDock = styled.div`
  display: flex;
  flex: none;
  align-items: flex-start;
  gap: 1px;
  width: 63px;
  border-right: 1px solid #77756a;
`

const SideBar = styled.div`
  width: 20px;
  padding: 0 1px 3px 0;
  border-right: 1px solid #b9b6a5;
  border-bottom: 1px solid #b9b6a5;
`

const SideGrip = styled.div`
  height: 5px;
  margin: 2px 1px 1px;
  border: solid #fff;
  border-width: 1px 0;
  box-shadow: 0 1px #c2bfae, inset 0 1px #c2bfae;
`

const SideTools = styled.div`
  display: flex;
  flex-direction: column;
  align-items: center;
  height: ${(props) => props.$height}px;

  ${ToolButton} {
    flex: 1;
    height: auto;
    min-height: 0;
  }

  ${Separator} {
    width: 16px;
    height: 5px;
    border-top: 2px solid transparent;
    border-left: none;
    box-shadow: inset 0 1px #bbb8a8;
  }
`

const DocumentArea = styled.section`
  display: flex;
  flex: 1;
  flex-direction: column;
  min-width: 0;
`

const CanvasRow = styled.div`
  display: flex;
  flex: 1;
  min-height: 0;
`

const Canvas = styled.div`
  position: relative;
  flex: 1;
  overflow: hidden;
  background: #000;
`

const DrawingSvg = styled.svg`
  display: block;
  width: 100%;
  height: 100%;
`

const UcsSvg = styled.svg`
  position: absolute;
  bottom: 0;
  left: 0;
  width: 100px;
  height: 100px;
`

const Palette = styled.section`
  position: absolute;
  top: 25px;
  left: 173px;
  padding: 2px;
  border: 1px solid #d8d5c6;
  background: #ece9d8;
`

const PaletteTitle = styled.div`
  display: flex;
  align-items: center;
  justify-content: space-between;
  height: 14px;
  padding: 0 2px;
  overflow: hidden;
  background: #0054e3;
  color: #fff;
  font-weight: 700;
  line-height: 10px;
`

const PaletteClose = styled.button`
  width: 11px;
  height: 10px;
  border: 1px solid #fff;
  border-color: #fff #555 #555 #fff;
  background: #ece9d8;

  svg {
    display: block;
    width: 9px;
    height: 8px;
    fill: none;
    stroke: #000;
    stroke-width: 2;
  }
`

const PaletteTools = styled.div`
  display: flex;
  align-items: center;
  height: 24px;
  padding: 0 3px 0 2px;
`

const Highlight = styled.svg`
  position: absolute;
  top: 17px;
  left: 127px;
  width: 512px;
  height: 88px;
  pointer-events: none;
`

const WatermarkSvg = styled.svg`
  position: absolute;
  right: 44px;
  bottom: 1px;
  width: 180px;
  height: 88px;
`

const scrollPart = css`
  flex: none;
  width: 12px;
  height: 12px;
  border: 1px solid #fff;
  border-radius: 2px;
  background: #c3d3fc;
`

const ScrollButton = styled.button`
  ${scrollPart}

  svg {
    display: block;
    width: 10px;
    height: 10px;
    fill: none;
    stroke: #4d6185;
    stroke-width: 2;
  }
`

const ScrollThumb = styled.span`
  ${scrollPart}
  background-image: repeating-linear-gradient(${(props) => (props.$row ? '90deg' : '0deg')}, #9db5ee 0 1px, transparent 1px 3px);
  background-clip: padding-box;
  background-origin: content-box;
`

const ScrollGap = styled.span`
  flex: 1;
`

const VerticalScroll = styled.div`
  display: flex;
  flex: none;
  flex-direction: column;
  width: 8px;
  overflow: hidden;
  background: #f9f8f3;
`

const TabRow = styled.div`
  display: flex;
  flex: none;
  height: 12px;
  padding-right: 8px;
`

const NavButton = styled.button`
  display: flex;
  flex: none;
  align-items: center;
  justify-content: center;
  width: 14px;
  border-right: 1px solid #c2bfae;
  background: #f6f5ef;

  svg {
    width: 8px;
    height: 8px;
    fill: #000;
  }
`

const Tabs = styled.div`
  display: flex;
  flex: 1;
  padding-left: 5px;
`

const Tab = styled.button`
  position: relative;
  z-index: 0;
  height: 11px;
  padding: 0 6px;
  line-height: 11px;
  font-weight: ${(props) => (props.$active ? 700 : 400)};
  color: ${(props) => (props.$active ? '#fff' : '#111')};

  &::before,
  &::after {
    content: "";
    position: absolute;
    z-index: -1;
    top: 0;
    bottom: 0;
    border-bottom: 1px solid #111;
    background: ${(props) => (props.$active ? '#000' : '#ece9d8')};
  }

  &::before {
    left: 0;
    right: 50%;
    border-left: 1px solid #111;
    transform: skewX(20deg);
  }

  &::after {
    left: 40%;
    right: 0;
    border-right: 1px solid #111;
    transform: skewX(-20deg);
  }
`

const HorizontalScroll = styled.div`
  display: flex;
  width: 316px;
  background: #f9f8f3;
`

const ScrollSplit = styled.span`
  width: 5px;
  border: 1px solid #b9b6a5;
  background: #ece9d8;
`

const BottomEdge = styled.footer`
  flex: none;
  height: 6px;
  border-top: 2px solid #fff;
  border-bottom: 1px solid #3c3b36;
`

export default App
